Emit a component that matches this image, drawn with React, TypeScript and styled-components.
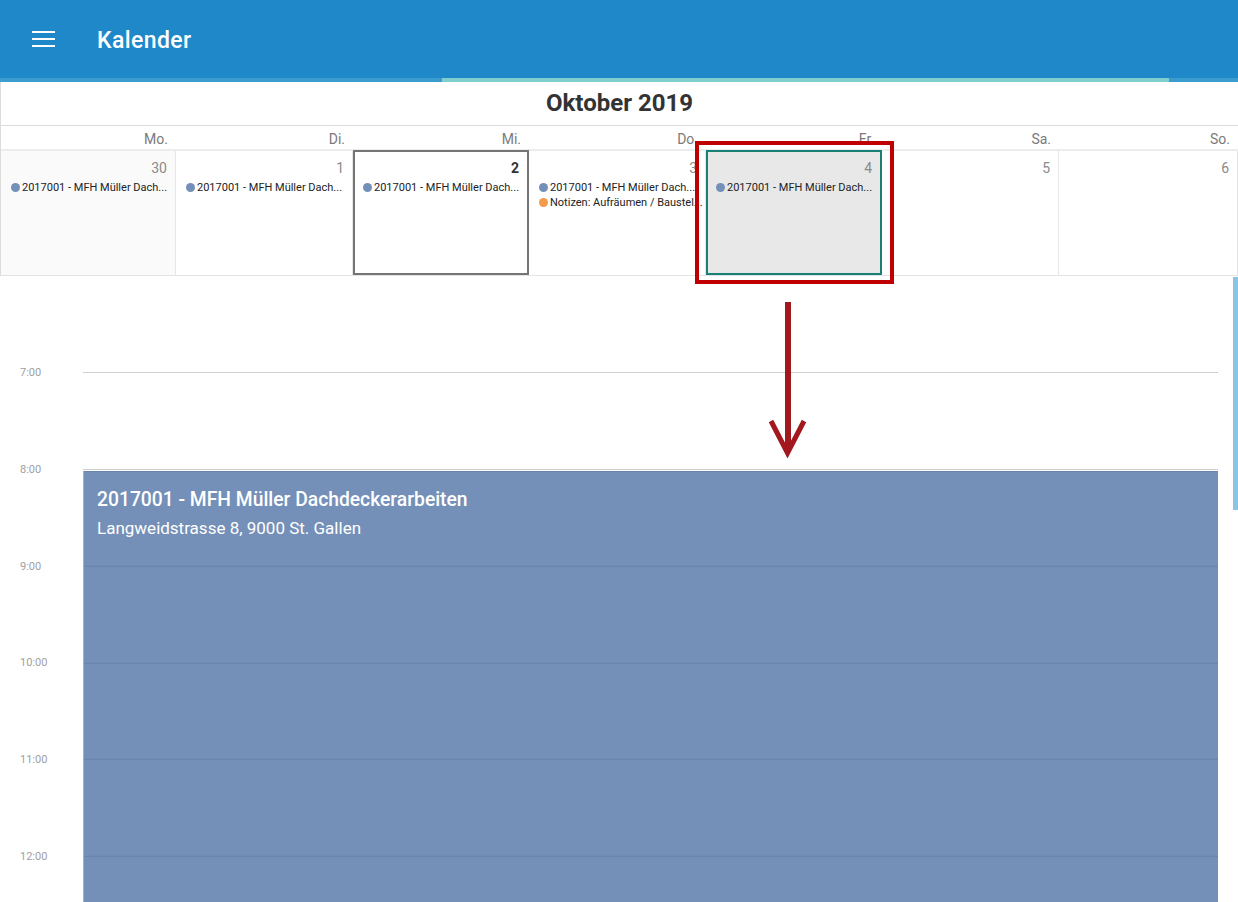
import React from "react"
import styled, { createGlobalStyle } from "styled-components"

const HOUR = 96.75

type CalEvent = { label: string; color: string }
type Day = {
  num: string
  outside?: boolean
  today?: boolean
  selected?: boolean
  events: CalEvent[]
}

const BLUE_DOT = "#7490b8"
const ORANGE_DOT = "#f39a4c"
const PROJECT = "2017001 - MFH Müller Dachdeckerarbeiten"
// month cells show the shortened label, like the app does
const PROJECT_SHORT = "2017001 - MFH Müller Dach..."

const weekdays = ["Mo.", "Di.", "Mi.", "Do.", "Fr.", "Sa.", "So."]

const days: Day[] = [
  { num: "30", outside: true, events: [{ label: PROJECT_SHORT, color: BLUE_DOT }] },
  { num: "1", events: [{ label: PROJECT_SHORT, color: BLUE_DOT }] },
  { num: "2", today: true, events: [{ label: PROJECT_SHORT, color: BLUE_DOT }] },
  {
    num: "3",
    events: [
      { label: PROJECT_SHORT, color: BLUE_DOT },
      { label: "Notizen: Aufräumen / Baustel...", color: ORANGE_DOT },
    ],
  },
  { num: "4", selected: true, events: [{ label: PROJECT_SHORT, color: BLUE_DOT }] },
  { num: "5", events: [] },
  { num: "6", events: [] },
]

const hours = ["7:00", "8:00", "9:00", "10:00", "11:00", "12:00"]

const GlobalStyle = createGlobalStyle`
  html, body {
    margin: 0;
    padding: 0;
    background: #fff;
    overflow: hidden;
  }
  body {
    font-family: Roboto, "Liberation Sans", Arial, sans-serif;
  }
  * {
    box-sizing: border-box;
  }
`

const Page = styled.div`
  position: relative;
  width: 1238px;
  height: 902px;
  overflow: hidden;
  display: flex;
  flex-direction: column;
`

const AppBar = styled.header`
  height: 78px;
  flex: 0 0 78px;
  background: #1f88c9;
  display: flex;
  align-items: center;
  padding-left: 32px;
  gap: 42px;
`

const MenuButton = styled.div`
  width: 23px;
  height: 17px;
  display: flex;
`

const AppTitle = styled.h1`
  margin: 0;
  color: #fff;
  font-size: 23px;
  font-weight: 500;
  letter-spacing: 0.4px;
  padding-top: 2px;
`

const TabStrip = styled.div`
  height: 4px;
  flex: 0 0 4px;
  background: #3b9ccf;
  display: flex;
  padding-left: 442px;
`

const TabIndicator = styled.div`
  width: 727px;
  height: 100%;
  background: #7fcdcc;
`

const Calendar = styled.section`
  border-left: 1px solid #dcdcdc;
  display: flex;
  flex-direction: column;
`

const MonthTitle = styled.div`
  height: 44px;
  border-bottom: 1px solid #dcdcdc;
  display: flex;
  align-items: center;
  justify-content: center;
  font-size: 24px;
  font-weight: 700;
  color: #333;
  padding-bottom: 1px;
`

const WeekRow = styled.div`
  display: grid;
  grid-template-columns: 175px 177px 176px 177px 176px 177px 1fr;
`

const WeekdayRow = styled(WeekRow)`
  height: 25px;
  border-bottom: 2px solid #ececec;
`

const Weekday = styled.div`
  text-align: right;
  padding: 1px 8px 0 0;
  font-size: 14px;
  color: #7a7a7a;
  line-height: 25px;
`

const DaysRow = styled(WeekRow)`
  height: 125px;
  border-bottom: 1px solid #e3e3e3;
`

const DayCell = styled.div<{ $outside?: boolean; $today?: boolean; $selected?: boolean }>`
  display: flex;
  flex-direction: column;
  min-width: 0;
  background: ${p => (p.$selected ? "#e8e8e8" : p.$outside ? "#fafafa" : "#fff")};
  border-right: 1px solid #e6e6e6;
  padding: 8px 0 0 10px;
  ${p =>
    p.$today || p.$selected
      ? `
    border: 2px solid ${p.$selected ? "#1b8074" : "#757575"};
    padding: 7px 0 0 8px;
    margin-top: -1px;
  `
      : ""}
`

const DayNumber = styled.div<{ $bold?: boolean }>`
  text-align: right;
  padding-right: 8px;
  font-size: 14px;
  line-height: 18px;
  color: ${p => (p.$bold ? "#333" : "#8a8a8a")};
  font-weight: ${p => (p.$bold ? 700 : 400)};
  margin-bottom: 3px;
`

const EventItem = styled.div`
  display: flex;
  align-items: center;
  gap: 2px;
  height: 15px;
  font-size: 11px;
  color: #222;
  min-width: 0;
`

const Dot = styled.span<{ $color: string }>`
  flex: 0 0 9px;
  width: 9px;
  height: 9px;
  border-radius: 50%;
  background: ${p => p.$color};
`

const EventLabel = styled.span`
  white-space: nowrap;
`

const Timeline = styled.section`
  position: relative;
  flex: 1;
  padding-top: 96px;
`

const HourRow = styled.div`
  display: grid;
  grid-template-columns: 83px 1135px;
  height: ${HOUR}px;
`

const HourLabel = styled.div`
  font-size: 11px;
  color: #a0a0a0;
  padding-left: 20px;
  margin-top: -6px;
  line-height: 14px;
`

const HourLine = styled.div`
  border-top: 1px solid #cfcfcf;
`

const DayEvent = styled.div`
  position: absolute;
  left: 83px;
  width: 1135px;
  top: ${96 + HOUR + 2}px;
  bottom: 0;
  background: repeating-linear-gradient(
      to bottom,
      #6680aa 0,
      #6680aa 1px,
      transparent 1px,
      transparent ${HOUR}px
    )
    #7490b8;
  background-position: 0 ${HOUR - 2}px;
  border-left: 1px solid #9db0cc;
  padding: 17px 13px;
  color: #fff;
`

const DayEventTitle = styled.div`
  font-size: 19.3px;
  font-weight: 500;
  line-height: 24px;
`

const DayEventPlace = styled.div`
  font-size: 17px;
  line-height: 22px;
  margin-top: 5px;
`

const ScrollThumb = styled.div`
  position: absolute;
  right: 0;
  top: 1px;
  width: 5px;
  height: 233px;
  background: #8cc4e5;
`

const Highlight = styled.div`
  position: absolute;
  left: 695px;
  top: 141px;
  width: 199px;
  height: 143px;
  border: 4px solid #c00000;
  pointer-events: none;
`

const Arrow = styled.svg`
  position: absolute;
  left: 765px;
  top: 300px;
  pointer-events: none;
`

function MenuIcon() {
  return (
    <svg width="23" height="17" viewBox="0 0 23 17">
      <rect x="0" y="0" width="23" height="2" fill="#fff" />
      <rect x="0" y="7" width="23" height="2" fill="#fff" />
      <rect x="0" y="14" width="23" height="2" fill="#fff" />
    </svg>
  )
}

export default function App() {
  return (
    <Page>
      <GlobalStyle />
      <AppBar>
        <MenuButton>
          <MenuIcon />
        </MenuButton>
        <AppTitle>Kalender</AppTitle>
      </AppBar>
      <TabStrip>
        <TabIndicator />
      </TabStrip>

      <Calendar>
        <MonthTitle>Oktober 2019</MonthTitle>
        <WeekdayRow>
          {weekdays.map(w => (
            <Weekday key={w}>{w}</Weekday>
          ))}
        </WeekdayRow>
        <DaysRow>
          {days.map(d => (
            <DayCell key={d.num} $outside={d.outside} $today={d.today} $selected={d.selected}>
              <DayNumber $bold={d.today}>{d.num}</DayNumber>
              {d.events.map((e, i) => (
                <EventItem key={i}>
                  <Dot $color={e.color} />
                  <EventLabel>{e.label}</EventLabel>
                </EventItem>
              ))}
            </DayCell>
          ))}
        </DaysRow>
      </Calendar>

      <Timeline>
        {hours.map(h => (
          <HourRow key={h}>
            <HourLabel>{h}</HourLabel>
            <HourLine />
          </HourRow>
        ))}
        <DayEvent>
          <DayEventTitle>{PROJECT}</DayEventTitle>
          <DayEventPlace>Langweidstrasse 8, 9000 St. Gallen</DayEventPlace>
        </DayEvent>
        <ScrollThumb />
      </Timeline>

      <Highlight />
      <Arrow width="46" height="160" viewBox="0 0 46 160">
        <line x1="23" y1="2" x2="23" y2="150" stroke="#a3171f" strokeWidth="6" />
        <polyline
          points="6,121 22.5,153 39,121"
          fill="none"
          stroke="#a3171f"
          strokeWidth="5"
          strokeLinejoin="miter"
        />
      </Arrow>
    </Page>
  )
}
